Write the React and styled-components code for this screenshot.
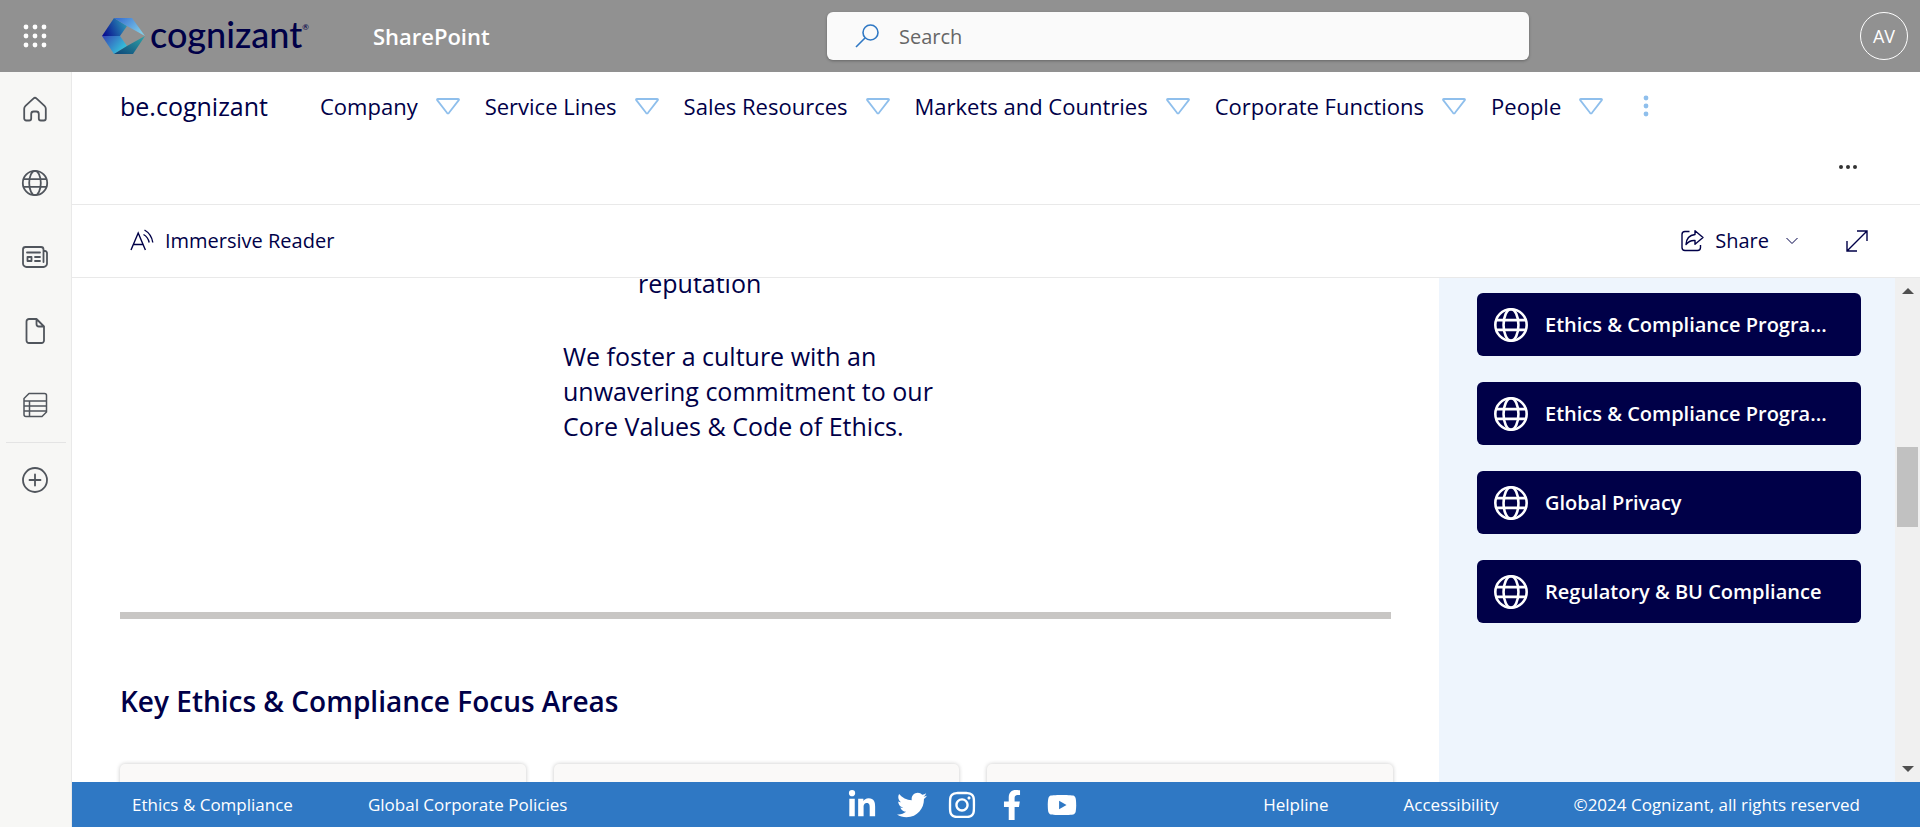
import React from "react";
import styled, { createGlobalStyle } from "styled-components";
import { FaLinkedinIn, FaTwitter, FaInstagram, FaFacebookF, FaYoutube } from "react-icons/fa";

const NAVY = "#000048";
const RULE = "#e9e9e9";
const ICON_GRAY = "#50555c";

const GlobalStyle = createGlobalStyle`
  *, *::before, *::after { box-sizing: border-box; }
  body { margin: 0; background: #fff; color: ${NAVY}; font-family: "Open Sans", "Noto Sans", sans-serif; }
  button { font: inherit; color: inherit; background: none; border: 0; padding: 0; display: inline-flex; align-items: center; cursor: pointer; }
  a { color: inherit; text-decoration: none; }
  svg { display: block; flex: none; }
`;

const Page = styled.div`
  display: flex;
  flex-direction: column;
  height: 100vh;
  overflow: hidden;
`;

const SuiteBar = styled.header`
  display: grid;
  grid-template-columns: 804fr 702px 379fr;
  align-items: center;
  height: 72px;
  flex: none;
  padding: 0 12px 0 23px;
  background: #919191;
`;

const SuiteStart = styled.div`
  display: flex;
  align-items: center;
`;

const Brand = styled.a`
  display: flex;
  align-items: center;
  gap: 4px;
  margin-left: 55px;
`;

const Wordmark = styled.span`
  font: 500 36px/40px Lato, sans-serif;
  color: ${NAVY};
  height: 44px;
`;

const Registered = styled.sup`
  font-size: 8px;
  line-height: 8px;
  vertical-align: 18px;
`;

const ProductName = styled.span`
  margin-left: 64px;
  font-size: 22px;
  line-height: 32px;
  font-weight: 600;
  color: #fff;
`;

const SearchBox = styled.label`
  display: flex;
  align-items: center;
  gap: 20px;
  height: 48px;
  padding: 0 28px;
  border-radius: 6px;
  background: #fafafa;
  box-shadow: 0 1px 3px rgba(0, 0, 0, 0.3);
`;

const SearchInput = styled.input`
  flex: 1;
  min-width: 0;
  padding: 2px 0 0;
  border: 0;
  outline: 0;
  background: none;
  font: 400 20px/28px "Open Sans", sans-serif;
  &::placeholder { color: #666; opacity: 1; }
`;

const Avatar = styled.button`
  justify-self: end;
  justify-content: center;
  width: 48px;
  height: 48px;
  border: 1px solid #fff;
  border-radius: 50%;
  color: #fff;
  font-size: 18px;
`;

const Body = styled.div`
  display: flex;
  flex: 1;
  min-height: 0;
`;

const Rail = styled.nav`
  display: flex;
  flex-direction: column;
  align-items: flex-start;
  width: 72px;
  flex: none;
  border-right: 1px solid ${RULE};
  background: #f7f7f5;
`;

const RailButton = styled.button`
  justify-content: center;
  width: 70px;
  height: 74px;
  color: ${ICON_GRAY};
`;

const RailDivider = styled.hr`
  width: 60px;
  height: 1px;
  margin: 0 0 0 6px;
  border: 0;
  background: #e4e4e4;
`;

const Main = styled.div`
  display: flex;
  flex-direction: column;
  flex: 1;
  min-width: 0;
`;

const SiteHeader = styled.div`
  height: 133px;
  flex: none;
  border-bottom: 1px solid ${RULE};
`;

const SiteNav = styled.nav`
  display: flex;
  align-items: center;
  height: 68px;
  padding-left: 48px;
`;

const SiteTitle = styled.a`
  width: 200px;
  font-size: 25px;
  line-height: 36px;
`;

const NavList = styled.div`
  display: flex;
  gap: 25px;
`;

const NavButton = styled.button`
  gap: 18px;
  font-size: 22px;
  line-height: 32px;
`;

const DotsButton = styled.button`
  margin-left: 40px;
  color: #8fbfec;
`;

const HeaderTools = styled.div`
  display: flex;
  justify-content: flex-end;
  padding: 24px 62px 0 0;
  color: #333;
`;

const CommandBar = styled.div`
  display: flex;
  align-items: center;
  height: 73px;
  flex: none;
  padding: 0 52px 0 58px;
  border-bottom: 1px solid ${RULE};
`;

const CommandButton = styled.button`
  gap: 11px;
  font-size: 20px;
  line-height: 28px;
`;

const CommandEnd = styled.div`
  display: flex;
  align-items: center;
  gap: 48px;
  margin-left: auto;
`;

const Viewport = styled.div`
  display: flex;
  flex: 1;
  min-height: 0;
  overflow: hidden;
`;

const Article = styled.main`
  flex: 1;
  min-width: 0;
  padding: 0 46px 0 48px;
`;

const Statement = styled.section`
  margin-top: -12px;
  padding-left: 443px;
  font-size: 25px;
  line-height: 35px;
  p { width: 400px; margin: 38px 0 0; }
`;

const Bullets = styled.ul`
  margin: 0;
  padding-left: 75px;
  list-style: none;
`;

const Divider = styled.hr`
  height: 7px;
  margin: 168px 2px 0 0;
  border: 0;
  background: #c8c6c4;
`;

const SectionTitle = styled.h2`
  margin: 62px 0 0;
  font-size: 28px;
  line-height: 40px;
  font-weight: 600;
`;

const Cards = styled.div`
  display: grid;
  grid-template-columns: repeat(3, 1fr);
  gap: 28px;
  margin-top: 43px;
`;

const Card = styled.article`
  height: 240px;
  border-radius: 5px;
  background: #faf9f8;
  box-shadow: 0 0 4px rgba(0, 0, 0, 0.22);
`;

const Aside = styled.aside`
  display: flex;
  flex-direction: column;
  gap: 26px;
  width: 456px;
  flex: none;
  padding: 15px 34px 0 38px;
  background: #eef5fd;
`;

const LinkTile = styled.a`
  display: flex;
  align-items: center;
  gap: 16px;
  height: 63px;
  padding: 0 16px;
  border-radius: 6px;
  background: ${NAVY};
  color: #fff;
  font-size: 20px;
  font-weight: 600;
  line-height: 28px;
  white-space: nowrap;
`;

const ScrollBar = styled.div`
  display: flex;
  flex-direction: column;
  align-items: center;
  width: 25px;
  flex: none;
  padding: 9px 0;
  background: #f0f0f0;
`;

const ScrollTrack = styled.div`
  display: grid;
  grid-template-rows: 153fr 81fr 240fr;
  flex: 1;
`;

const ScrollThumb = styled.div`
  grid-row: 2;
  width: 21px;
  background: #c1c1c1;
`;

const Footer = styled.footer`
  display: grid;
  grid-template-columns: 717fr auto 785fr;
  align-items: center;
  height: 45px;
  flex: none;
  padding: 0 60px;
  background: #2f78c4;
  color: #fff;
  font-size: 17px;
  line-height: 24px;
  white-space: nowrap;
`;

const FooterGroup = styled.div`
  display: flex;
  align-items: center;
  gap: ${(p) => p.$gap}px;
  justify-content: ${(p) => (p.$end ? "flex-end" : "flex-start")};
`;

const Waffle = () => (
  <svg width="24" height="24" viewBox="0 0 24 24" fill="#fff">
    {[3, 12, 21].map((y) => [3, 12, 21].map((x) => <circle key={`${x}-${y}`} cx={x} cy={y} r="2.4" />))}
  </svg>
);

const Hexagon = () => (
  <svg width="44" height="38" viewBox="0 0 44 38">
    <defs>
      <linearGradient id="hexA" x1="0" y1=".6" x2="1" y2=".3"><stop offset="0" stopColor="#0a1090" /><stop offset="1" stopColor="#2c9bb8" /></linearGradient>
      <linearGradient id="hexB" x1="0" y1="0" x2="1" y2=".6"><stop offset="0" stopColor="#3068cf" /><stop offset="1" stopColor="#7fcbe8" /></linearGradient>
      <linearGradient id="hexC" x1="0" y1="0" x2="1" y2=".6"><stop offset="0" stopColor="#3544b4" /><stop offset="1" stopColor="#35c6dc" /></linearGradient>
      <linearGradient id="hexD" x1="0" y1="1" x2="1" y2="0"><stop offset="0" stopColor="#0c4478" /><stop offset="1" stopColor="#2fa5a8" /></linearGradient>
    </defs>
    <path d="M0 19 12 1 25 9 18 19Z" fill="url(#hexA)" />
    <path d="M12 1H30L43 19 25 9Z" fill="url(#hexB)" />
    <path d="M0 19H18L25 29 12 37Z" fill="url(#hexC)" />
    <path d="M12 37 25 29 43 19 31 37Z" fill="url(#hexD)" />
  </svg>
);

const Icon = ({ size = 28, width = 1.8, children }) => (
  <svg width={size} height={size} viewBox="0 0 28 28" fill="none" stroke="currentColor" strokeWidth={width} strokeLinejoin="round" strokeLinecap="round">
    {children}
  </svg>
);

const SearchIcon = () => (
  <svg width="24" height="24" viewBox="0 0 24 24" fill="none" stroke="#2f78c4" strokeWidth="1.6">
    <circle cx="15.5" cy="8.5" r="7.5" /><path d="M10 14 1 23" />
  </svg>
);

const HomeIcon = () => (
  <Icon><path d="M4.500 10.800 12.600 3.400a2 2 0 0 1 2.800 0L23.500 10.800a4 4 0 0 1 1.300 3V23.500a2 2 0 0 1-2 2H19.800a2 2 0 0 1-2-2V19a2.500 2.500 0 0 0-2.500-2.500h-2.600A2.500 2.500 0 0 0 10.200 19v4.500a2 2 0 0 1-2 2H5.200a2 2 0 0 1-2-2V13.800a4 4 0 0 1 1.300-3Z" /></Icon>
);

const GlobeIcon = ({ size = 28, width = 1.8 }) => (
  <Icon size={size} width={width}>
    <circle cx="14" cy="14" r="12.200" /><ellipse cx="14" cy="14" rx="5.800" ry="12.200" /><path d="M2.700 10.200H25.300M2.700 17.800H25.300" />
  </Icon>
);

const NewsIcon = () => (
  <Icon>
    <path d="M22.500 19V6.500a2.500 2.500 0 0 0-2.500-2.500H4.500A2.500 2.500 0 0 0 2 6.500v14A3.500 3.500 0 0 0 5.500 24H22.500a3.500 3.500 0 0 0 3.500-3.500V10a2 2 0 0 0-2-2h-1.500M6 9.500H19M14 14h5M14 18h5M6.500 14h4v4h-4Z" />
  </Icon>
);

const FileIcon = () => (
  <Icon><path d="M15.500 2H8a2.500 2.500 0 0 0-2.500 2.500v19A2.500 2.500 0 0 0 8 26H20.500a2.500 2.500 0 0 0 2.500-2.500V9.500Zm0 0v5A2.500 2.500 0 0 0 18 9.500H23" /></Icon>
);

const ListIcon = () => (
  <Icon width={1.5}><path d="M8 2.500H23.500a2 2 0 0 1 2 2V21L21 25.500H5a2 2 0 0 1-2-2V7.500ZM3 10H25.500M3 15H25.500M3 20H25.500M8.500 10V25.500" /></Icon>
);

const AddIcon = () => (
  <Icon><circle cx="14" cy="14" r="12" /><path d="M14 8.500v11M8.500 14h11" /></Icon>
);

const Triangle = () => (
  <svg width="24" height="17" viewBox="0 0 24 17" fill="none" stroke="#8fbfec" strokeWidth="1.800" strokeLinejoin="round">
    <path d="M2 1H22Q23.600 1 22.600 2.400L13 14.800Q12 16 11 14.800L1.400 2.400Q.4 1 2 1Z" />
  </svg>
);

const Dots = ({ vertical }) => (
  <svg width={vertical ? 6 : 20} height={vertical ? 22 : 6} fill="currentColor">
    {[0, 1, 2].map((i) => (vertical
      ? <circle key={i} cx="3" cy={3 + i * 8} r="2.400" />
      : <circle key={i} cx={3 + i * 7} cy="3" r="2" />))}
  </svg>
);

const ReaderIcon = () => (
  <svg width="24" height="24" viewBox="0 0 24 24" fill="none" stroke="currentColor" strokeWidth="1.400">
    <path d="M1 21 8.200 4 15.400 21M3.500 15.500H13M14.500 1Q21.500 5 22.800 13.500M13.500 5.500Q18 8 19.200 13.500" />
  </svg>
);

const ShareIcon = () => (
  <svg width="24" height="24" viewBox="0 0 24 24" fill="none" stroke="currentColor" strokeWidth="1.400" strokeLinejoin="round">
    <path d="M9.500 2.500H5A3 3 0 0 0 2 5.500V18.500a3 3 0 0 0 3 3H17.500a3 3 0 0 0 3-3V16" />
    <path d="M15 1.800 23 8.500 15 15.200V11.500Q9.500 11 6 15.500 6.500 6.500 15 5.500Z" />
  </svg>
);

const ChevronSvg = styled.svg`
  margin-left: 6px;
`;

const Chevron = () => (
  <ChevronSvg width="12" height="8" viewBox="0 0 12 8" fill="none" stroke="currentColor" strokeWidth="1"><path d="M.5 1 6 6.500 11.500 1" /></ChevronSvg>
);

const ExpandIcon = () => (
  <svg width="22" height="22" viewBox="0 0 22 22" fill="none" stroke="currentColor" strokeWidth="1.400"><path d="M11 1H21V11M1 11V21H11M1 21 21 1" /></svg>
);

const Arrow = ({ down }) => (
  <svg width="12" height="8" fill="#505050"><path d={down ? "M0 1H12L6 7Z" : "M0 7H12L6 1Z"} /></svg>
);

const NAV = ["Company", "Service Lines", "Sales Resources", "Markets and Countries", "Corporate Functions", "People"];
const TILES = ["Ethics & Compliance Progra...", "Ethics & Compliance Progra...", "Global Privacy", "Regulatory & BU Compliance"];
const RAIL = [["Home", HomeIcon], ["Sites", GlobeIcon], ["News", NewsIcon], ["Files", FileIcon], ["Lists", ListIcon]];
const SOCIAL = [["LinkedIn", FaLinkedinIn], ["Twitter", FaTwitter], ["Instagram", FaInstagram], ["Facebook", FaFacebookF], ["YouTube", FaYoutube]];

export default function App() {
  return (
    <Page>
      <GlobalStyle />
      <SuiteBar>
        <SuiteStart>
          <button aria-label="App launcher"><Waffle /></button>
          <Brand href="#"><Hexagon /><Wordmark>cognizant<Registered>®</Registered></Wordmark></Brand>
          <ProductName>SharePoint</ProductName>
        </SuiteStart>
        <SearchBox><SearchIcon /><SearchInput type="search" placeholder="Search" aria-label="Search" /></SearchBox>
        <Avatar>AV</Avatar>
      </SuiteBar>
      <Body>
        <Rail aria-label="App bar">
          {RAIL.map(([label, Glyph]) => <RailButton key={label} aria-label={label}><Glyph /></RailButton>)}
          <RailDivider />
          <RailButton aria-label="Create"><AddIcon /></RailButton>
        </Rail>
        <Main>
          <SiteHeader>
            <SiteNav>
              <SiteTitle href="#">be.cognizant</SiteTitle>
              <NavList>{NAV.map((n) => <NavButton key={n}>{n}<Triangle /></NavButton>)}</NavList>
              <DotsButton aria-label="More links"><Dots vertical /></DotsButton>
            </SiteNav>
            <HeaderTools><button aria-label="More actions"><Dots /></button></HeaderTools>
          </SiteHeader>
          <CommandBar>
            <CommandButton><ReaderIcon />Immersive Reader</CommandButton>
            <CommandEnd>
              <CommandButton><ShareIcon />Share<Chevron /></CommandButton>
              <button aria-label="Expand"><ExpandIcon /></button>
            </CommandEnd>
          </CommandBar>
          <Viewport>
            <Article>
              <Statement>
                <Bullets><li>reputation</li></Bullets>
                <p>We foster a culture with an unwavering commitment to our Core Values &amp; Code of Ethics.</p>
              </Statement>
              <Divider />
              <SectionTitle>Key Ethics &amp; Compliance Focus Areas</SectionTitle>
              <Cards><Card /><Card /><Card /></Cards>
            </Article>
            <Aside>{TILES.map((t, i) => <LinkTile key={i} href="#"><GlobeIcon size={36} width={2} />{t}</LinkTile>)}</Aside>
            <ScrollBar aria-hidden="true"><Arrow /><ScrollTrack><ScrollThumb /></ScrollTrack><Arrow down /></ScrollBar>
          </Viewport>
          <Footer>
            <FooterGroup $gap={75}><a href="#">Ethics &amp; Compliance</a><a href="#">Global Corporate Policies</a></FooterGroup>
            <FooterGroup $gap={20}>{SOCIAL.map(([n, Glyph]) => <a key={n} href="#" aria-label={n}><Glyph size={30} /></a>)}</FooterGroup>
            <FooterGroup $gap={75} $end><a href="#">Helpline</a><a href="#">Accessibility</a><span>©2024 Cognizant, all rights reserved</span></FooterGroup>
          </Footer>
        </Main>
      </Body>
    </Page>
  );
}
